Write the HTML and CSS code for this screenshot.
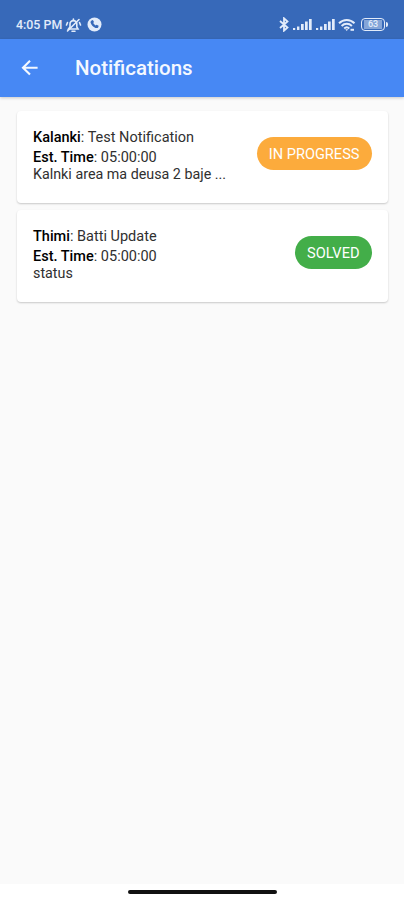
FILE: index.html
```html
<!DOCTYPE html>
<html lang="en">
<head>
    <meta charset="UTF-8">
    <meta name="viewport" content="width=device-width, initial-scale=1.0">
    <title>Notifications</title>
    <link rel="stylesheet" href="styles.css">
</head>
<body>
    <div class="status-bar">
        <div class="status-left">
            <span class="time">4:05 PM</span>
            <svg class="icon-mute" width="17" height="16" viewBox="0 0 17 16" fill="none" stroke="currentColor" stroke-width="1.6" stroke-linecap="round">
                <path d="M3.5 12h9.5l-1.2-2V7a3.4 3.4 0 0 0-6.8 0v3z"/>
                <path d="M7 14.2h3M8.4 3.4V2M14 2.5L2.5 14M1.5 8l1-2.5M15.5 8l-1-2.5"/>
            </svg>
            <svg class="icon-call" width="15" height="15" viewBox="0 0 15 15">
                <circle cx="7.5" cy="7.5" r="7" fill="currentColor"/>
                <path d="M4.6 3.4l1.3-.3 1.1 2-.8 1c.5 1 1.3 1.8 2.4 2.4l1-.8 2 1.1-.3 1.5c-.5.9-1.7 1-2.8.6-2.3-.9-4-2.6-4.8-4.8-.4-1-.1-2.2.9-2.7z" fill="#3769b9"/>
            </svg>
        </div>
        <div class="status-right">
            <svg width="10" height="15" viewBox="0 0 10 15" fill="none" stroke="currentColor" stroke-width="1.8">
                <path d="M1 4l7.5 6.5L5 13.7V1.3l3.5 3.2L1 11"/>
            </svg>
            <svg class="icon-signal" width="19" height="13" viewBox="0 0 19 13" fill="currentColor">
                <path d="M0 10h2.2v2H0zM4 8.5h2.4V12H4zM8 6h2.7v6H8zM12 3.5h2.7V12H12zM16 1h2.7v11H16z"/>
            </svg>
            <svg class="icon-signal" width="19" height="13" viewBox="0 0 19 13" fill="currentColor">
                <path d="M0 10h2.2v2H0zM4 8.5h2.4V12H4zM8 6h2.7v6H8zM12 3.5h2.7V12H12zM16 1h2.7v11H16z"/>
            </svg>
            <svg class="icon-wifi" width="18" height="14" viewBox="0 0 18 14" fill="none" stroke="currentColor" stroke-width="2">
                <path d="M1 5.2c4.5-4.3 11-4.3 15.5 0M3.6 7.9c3-2.8 7.3-2.8 10.3 0M6.2 10.4c1.5-1.4 3.6-1.4 5.1 0"/>
                <path d="M7.3 11.2h2.9L8.7 13z" fill="currentColor" stroke="none"/>
                <path d="M12.5 11.8h3.5"/>
            </svg>
            <div class="battery"><span>63</span></div>
        </div>
    </div>

    <div class="app-bar">
        <svg class="back" width="18" height="18" viewBox="0 0 18 18" fill="none" stroke="currentColor" stroke-width="2.1">
            <path d="M16.6 8.7H2.5M9 1.8L2 8.7l7 6.9"/>
        </svg>
        <h1>Notifications</h1>
    </div>

    <div class="list">
        <div class="card">
            <div class="details">
                <p class="title"><b>Kalanki</b>: Test Notification</p>
                <p><b>Est. Time</b>: 05:00:00</p>
                <p class="message">Kalnki area ma deusa 2 baje ...</p>
            </div>
            <span class="badge badge-progress">IN PROGRESS</span>
        </div>

        <div class="card">
            <div class="details">
                <p class="title"><b>Thimi</b>: Batti Update</p>
                <p><b>Est. Time</b>: 05:00:00</p>
                <p class="message">status</p>
            </div>
            <span class="badge badge-solved">SOLVED</span>
        </div>
    </div>

    <div class="nav-bar">
        <div class="handle"></div>
    </div>
</body>
</html>
```
FILE: styles.css
```css
:root {
    --primary: #4788f4;
    --primary-dark: #3769b9;
    --warning: #fcab3c;
    --success: #43ae49;
    --text: #303030;
    --bg: #fafafa;
}
* {
    box-sizing: border-box;
}
body {
    margin: 0;
    height: 100vh;
    display: flex;
    flex-direction: column;
    font-family: Roboto, sans-serif;
    background: var(--bg);
    color: var(--text);
}
.status-bar {
    height: 39px;
    flex: none;
    display: flex;
    justify-content: space-between;
    align-items: center;
    padding: 10px 16px 0 16px;
    background: var(--primary-dark);
    color: #e3ecfa;
}
.status-left,
.status-right {
    display: flex;
    align-items: center;
}
.time {
    font-size: 12.4px;
    font-weight: 500;
}
.icon-mute {
    margin-left: 3px;
}
.icon-call {
    margin-left: 5px;
}
.icon-signal {
    margin-left: 4px;
}
.icon-wifi {
    margin-left: 3px;
}
.battery {
    position: relative;
    width: 24px;
    height: 13px;
    margin: 0 3px 0 5px;
    border: 1.5px solid currentColor;
    border-radius: 4px;
    padding: 1px 2px;
}
.battery::after {
    content: "";
    position: absolute;
    right: -4px;
    top: 3px;
    width: 2px;
    height: 5px;
    border-radius: 0 2px 2px 0;
    background: currentColor;
}
.battery span {
    display: block;
    height: 9px;
    background: #84a5d8;
    color: #e3ecfa;
    font-size: 9px;
    font-weight: 500;
    line-height: 9px;
    text-align: center;
}
.app-bar {
    height: 58px;
    flex: none;
    display: flex;
    align-items: center;
    padding-left: 21px;
    background: var(--primary);
    color: #f4f8ff;
    box-shadow: 0 1px 3px rgba(0, 0, 0, 0.2);
}
h1 {
    margin: 0 0 0 36px;
    font-size: 20.5px;
    font-weight: 500;
}
.list {
    flex: 1;
    display: flex;
    flex-direction: column;
    gap: 7px;
    padding: 14px 16px 0 17px;
}
.card {
    height: 92px;
    display: flex;
    justify-content: space-between;
    align-items: flex-start;
    padding: 18px 16px 0;
    background: #fff;
    border-radius: 4px;
    box-shadow: 0 1px 2px rgba(0, 0, 0, 0.2);
}
.details {
    font-size: 14.5px;
    line-height: 17px;
}
.details p {
    margin: 0;
}
.details .title {
    margin-bottom: 3px;
}
.details .message {
    font-size: 14.3px;
}
.details b {
    font-weight: 500;
    color: #000;
}
.badge {
    height: 33px;
    margin-top: 8px;
    padding: 0 12.5px 0 12px;
    border-radius: 17px;
    color: #fff;
    font-size: 14.6px;
    line-height: 34px;
}
.badge-progress {
    background: var(--warning);
}
.badge-solved {
    background: var(--success);
}
.nav-bar {
    height: 16px;
    flex: none;
    padding-top: 6px;
    background: #fff;
}
.handle {
    width: 149px;
    height: 4px;
    margin: 0 auto;
    border-radius: 2px;
    background: #111;
}
```
